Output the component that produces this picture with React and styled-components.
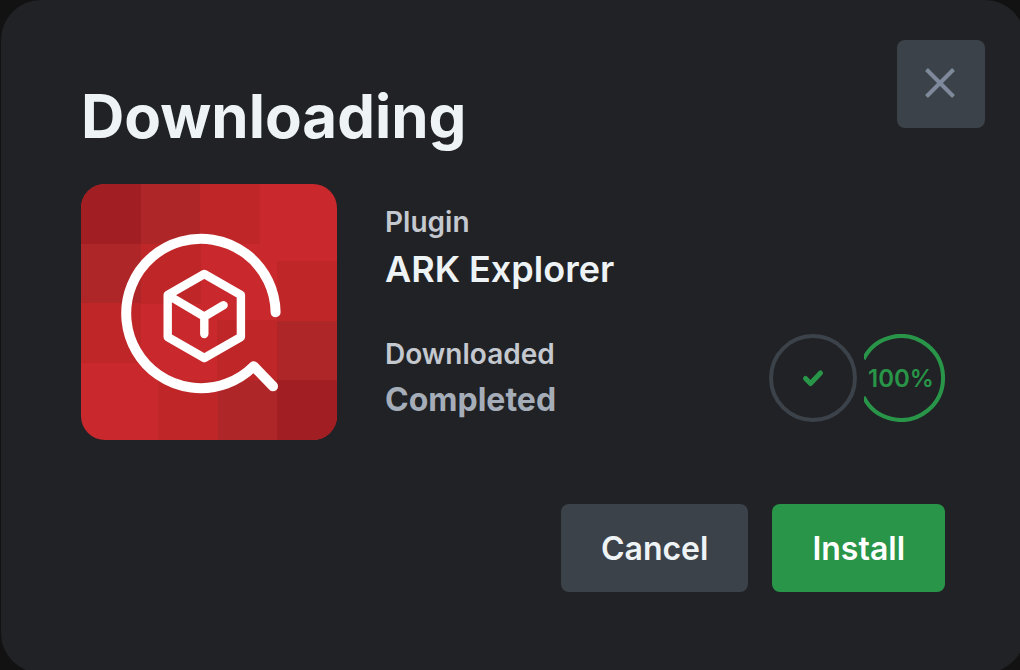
import React from 'react';
import styled, { createGlobalStyle } from 'styled-components';

const GlobalStyle = createGlobalStyle`
  *, *::before, *::after { box-sizing: border-box; }
  body {
    margin: 0;
    background: #121213;
    color: #eef3f5;
    font-family: Inter, "Liberation Sans", sans-serif;
    overflow: hidden;
  }
`;

const Backdrop = styled.div`
  min-height: 100vh;
  padding-left: 1px;
`;

const Modal = styled.main`
  position: relative;
  width: calc(100% + 5px);
  min-height: calc(100vh + 3px);
  padding: 80px;
  border-radius: 40px;
  background: #212225;
`;

const Button = styled.button`
  height: 88px;
  padding: 0 40px;
  border: 0;
  border-radius: 8px;
  background: ${(p) => (p.$primary ? '#289548' : '#3c4249')};
  color: ${(p) => (p.$primary ? '#ffffff' : '#eef3f5')};
  font: inherit;
  font-size: 32px;
  font-weight: 600;
  cursor: pointer;
`;

const CloseButton = styled(Button)`
  position: absolute;
  top: 40px;
  right: 40px;
  display: grid;
  place-items: center;
  width: 88px;
  padding: 0;
  color: #7e8a9c;
`;

const Title = styled.h1`
  margin: 0 0 32px;
  font-size: 60px;
  line-height: 72px;
  font-weight: 700;
`;

const Details = styled.section`
  display: flex;
  gap: 48px;
`;

const PluginLogo = styled.svg`
  flex: none;
  display: block;
  width: 256px;
  height: 256px;
  border-radius: 24px;
`;

const Fields = styled.div`
  flex: 1;
  display: flex;
  flex-direction: column;
  justify-content: space-between;
  padding: 20px 0 18px;
`;

const FieldRow = styled.div`
  display: flex;
  align-items: center;
  justify-content: space-between;
`;

const Field = styled.dl`
  margin: 0;
`;

const Label = styled.dt`
  margin-bottom: 8px;
  color: #c4c8cf;
  font-size: 28px;
  line-height: 36px;
  font-weight: 600;
`;

const Value = styled.dd`
  margin: 0;
  color: ${(p) => (p.$muted ? '#a5adb9' : '#eef3f5')};
  font-size: ${(p) => (p.$muted ? '32px' : '36px')};
  line-height: ${(p) => (p.$muted ? '40px' : '42px')};
  font-weight: ${(p) => (p.$muted ? 700 : 600)};
`;

const Status = styled.div`
  display: flex;
`;

const Ring = styled.div`
  display: grid;
  place-items: center;
  width: 88px;
  height: 88px;
  color: #289548;
  font-size: 24px;
  font-weight: 600;

  > * { grid-area: 1 / 1; }
`;

const Actions = styled.footer`
  display: flex;
  justify-content: flex-end;
  gap: 24px;
  margin-top: 64px;
`;

const TILES = [
  [0, 0, '#a11f23'], [60, 0, '#af2628'], [0, 60, '#af2628'],
  [119, 0, '#bf2628'], [60, 60, '#bf2628'], [0, 119, '#bf2628'],
  [196, 196, '#a11f23'], [136, 196, '#af2628'], [196, 136, '#af2628'],
  [77, 196, '#bf2628'], [136, 136, '#bf2628'], [196, 77, '#bf2628'],
];

function ExplorerLogo() {
  return (
    <PluginLogo viewBox="0 0 256 256" role="img" aria-label="ARK Explorer logo">
      <rect width="256" height="256" fill="#c9292c" />
      {TILES.map(([x, y, fill]) => (
        <rect key={`${x}-${y}`} x={x} y={y} width="60" height="60" fill={fill} />
      ))}
      <g fill="none" stroke="#fff" strokeLinecap="round" strokeLinejoin="round">
        <path strokeWidth="10" d="M194.6 128.3A74.7 74.7 0 1 0 172.7 182.3L192 202.3" />
        <path strokeWidth="8.4" d="M123.3 90L159.9 111V153L123.3 174L86.7 153V111Z M86.7 111L123.3 132.7L142.6 121.2M123.3 132.7V150" />
      </g>
    </PluginLogo>
  );
}

export default function App() {
  return (
    <>
      <GlobalStyle />
      <Backdrop>
        <Modal role="dialog" aria-labelledby="modal-title">
          <CloseButton type="button" aria-label="Close">
            <svg width="32" height="32" viewBox="0 0 32 32" fill="none" stroke="currentColor" strokeWidth="4">
              <path d="M1.5 1.5L28.5 28.5M28.5 1.5L1.5 28.5" />
            </svg>
          </CloseButton>
          <Title id="modal-title">Downloading</Title>
          <Details>
            <ExplorerLogo />
            <Fields>
              <Field>
                <Label>Plugin</Label>
                <Value>ARK Explorer</Value>
              </Field>
              <FieldRow>
                <Field>
                  <Label>Downloaded</Label>
                  <Value $muted>Completed</Value>
                </Field>
                <Status>
                  <Ring>
                    <svg width="88" height="88" viewBox="0 0 88 88" fill="none" aria-hidden="true">
                      <circle cx="44" cy="44" r="42" stroke="#3c4249" strokeWidth="4" />
                      <path d="M36.5 44.5L41.5 49.5L51.5 39" stroke="currentColor" strokeWidth="5" strokeLinecap="round" strokeLinejoin="round" />
                    </svg>
                  </Ring>
                  <Ring>
                    <svg width="88" height="88" viewBox="0 0 88 88" fill="none" aria-hidden="true">
                      <clipPath id="ring-gap">
                        <rect x="7" width="81" height="88" />
                      </clipPath>
                      <path clipPath="url(#ring-gap)" d="M6.6 25A42 42 0 1 1 6.6 63" stroke="currentColor" strokeWidth="4" />
                    </svg>
                    <span>100%</span>
                  </Ring>
                </Status>
              </FieldRow>
            </Fields>
          </Details>
          <Actions>
            <Button type="button">Cancel</Button>
            <Button type="button" $primary>Install</Button>
          </Actions>
        </Modal>
      </Backdrop>
    </>
  );
}
